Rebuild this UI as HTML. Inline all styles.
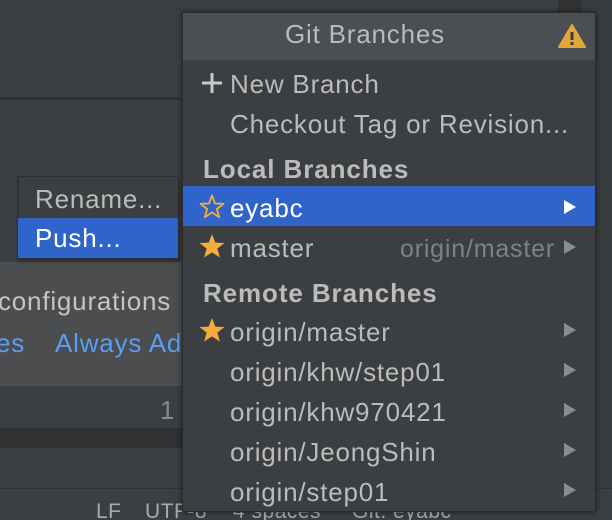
<!DOCTYPE html>
<html><head><style>
*{margin:0;padding:0;box-sizing:border-box}
html,body{width:612px;height:520px;overflow:hidden}
body{background:#3c3f41;position:relative;font-family:"Liberation Sans",sans-serif;color:#bbbbbb}
.abs{position:absolute}
.t{position:absolute;white-space:nowrap;font-size:26px;letter-spacing:0.8px;line-height:40px}
.b{font-weight:bold;letter-spacing:0.9px}
.s{font-size:21px;color:#aaa;top:492px;letter-spacing:0.5px}
</style></head><body>
<div class="abs" style="left:0;top:97px;width:182px;height:3px;background:#2f3133"></div>
<div class="abs" style="left:558px;top:0;width:24px;height:14px;background:#313335"></div>
<div class="abs" style="left:582px;top:0;width:30px;height:520px;background:#3a3d3f"></div>
<div class="abs" style="left:0;top:262px;width:182px;height:124px;background:#4b4d4f"></div>
<div class="t" style="left:-2px;top:281px;color:#c4c4c4">configurations</div>
<div class="t" style="left:-4px;top:323px;color:#589df6">es</div>
<div class="t" style="left:55px;top:323px;color:#589df6">Always Ad</div>
<div class="abs" style="left:0;top:386px;width:182px;height:42px;background:#3c3f41"></div>
<div class="t" style="left:160px;top:390px;color:#888">1</div>
<div class="abs" style="left:0;top:428px;width:182px;height:20px;background:#2f3133"></div>
<div class="abs" style="left:0;top:488px;width:612px;height:32px;background:#3c3f41;border-top:1px solid #323232"></div>
<div class="t s" style="left:96px">LF</div>
<div class="t s" style="left:145px">UTF-8</div>
<div class="t s" style="left:233px">4 spaces</div>
<div class="t s" style="left:352px">Git: eyabc</div>
<div class="abs" style="left:18px;top:176px;width:161px;height:83px;background:#3c3f41;border:1px solid #2d2f30;box-shadow:0 2px 4px rgba(0,0,0,.4)"></div>
<div class="t" style="left:35px;top:179px;color:#bbb">Rename...</div>
<div class="abs" style="left:18px;top:218px;width:160px;height:40px;background:#2f65ca"></div>
<div class="t" style="left:35px;top:218px;color:#fff">Push...</div>
<div class="abs" style="left:182px;top:12px;width:414px;height:500px;background:#3c3f41;border:1px solid #2b2b2b;box-shadow:0 0 6px rgba(0,0,0,.5)"></div>
<div class="abs" style="left:183px;top:13px;width:412px;height:47px;background:#4b4e52"></div>
<div class="t" style="left:285px;top:14px;color:#bbb">Git Branches</div>
<svg class="abs" style="left:557px;top:24px" width="30" height="24" viewBox="0 0 30 24"><path d="M15 1 L28 23 L2 23 Z" fill="#e0a63b" stroke="#e0a63b" stroke-linejoin="round" stroke-width="2"/><rect x="13.5" y="8" width="3" height="8" fill="#3c3f41"/><rect x="13.5" y="18" width="3" height="3" fill="#3c3f41"/></svg>
<svg class="abs" style="left:202px;top:73px" width="20" height="20"><path d="M10 0V20M0 10H20" stroke="#c8c8c8" stroke-width="3"/></svg>
<div class="t" style="left:230px;top:64px">New Branch</div>
<div class="t" style="left:230px;top:104px">Checkout Tag or Revision...</div>
<div class="t b" style="left:203px;top:149px">Local Branches</div>
<div class="abs" style="left:183px;top:186px;width:412px;height:40px;background:#2f65ca"></div>
<svg class="abs" style="left:199px;top:194px" width="26" height="25" viewBox="0 0 26 25"><path d="M13 1.5 L16 9.5 L24.5 9.8 L17.8 15 L20.2 23.2 L13 18.4 L5.8 23.2 L8.2 15 L1.5 9.8 L10 9.5 Z" fill="none" stroke="#f4ac3a" stroke-width="1.8" stroke-linejoin="round"/></svg>
<div class="t" style="left:230px;top:188px;color:#fff">eyabc</div>
<svg class="abs" style="left:563px;top:199px" width="14" height="16"><path d="M1 1 L13 8 L1 15Z" fill="#fff"/></svg>
<svg class="abs" style="left:198px;top:233px" width="28" height="26" viewBox="0 0 26 25"><path d="M13 1 L16.2 9.3 L25 9.6 L18.1 15 L20.6 23.6 L13 18.6 L5.4 23.6 L7.9 15 L1 9.6 L9.8 9.3 Z" fill="#f4ac3a"/></svg>
<div class="t" style="left:230px;top:228px">master</div>
<div class="t" style="left:400px;top:229px;color:#7f8183;font-size:25px">origin/master</div>
<svg class="abs" style="left:563px;top:239px" width="14" height="16"><path d="M1 1 L13 8 L1 15Z" fill="#8a8c8e"/></svg>
<div class="t b" style="left:203px;top:273px">Remote Branches</div>
<svg class="abs" style="left:198px;top:317px" width="28" height="26" viewBox="0 0 26 25"><path d="M13 1 L16.2 9.3 L25 9.6 L18.1 15 L20.6 23.6 L13 18.6 L5.4 23.6 L7.9 15 L1 9.6 L9.8 9.3 Z" fill="#f4ac3a"/></svg>
<div class="t" style="left:230px;top:312px">origin/master</div>
<div class="t" style="left:230px;top:352px">origin/khw/step01</div>
<div class="t" style="left:230px;top:392px">origin/khw970421</div>
<div class="t" style="left:230px;top:432px">origin/JeongShin</div>
<div class="t" style="left:230px;top:472px">origin/step01</div>
<svg class="abs" style="left:563px;top:322px" width="14" height="176"><g fill="#8a8c8e"><path d="M1 1 L13 8 L1 15Z"/><path d="M1 41 L13 48 L1 55Z"/><path d="M1 81 L13 88 L1 95Z"/><path d="M1 121 L13 128 L1 135Z"/><path d="M1 161 L13 168 L1 175Z"/></g></svg>
</body></html>
